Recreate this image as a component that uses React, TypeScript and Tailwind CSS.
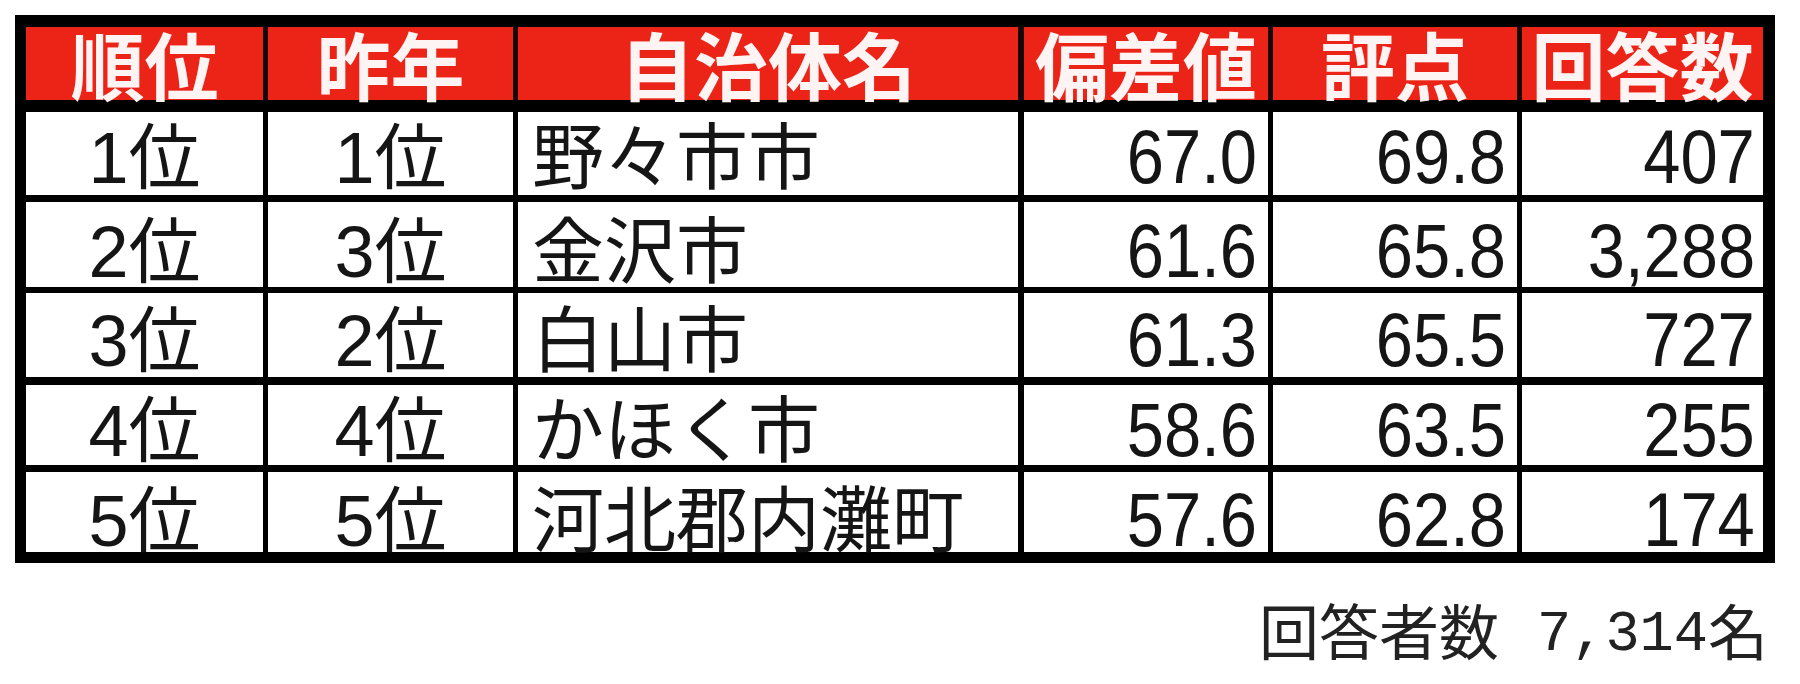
import React from "react";

type Row = {
  rank: string;
  prev: string;
  name: string;
  dev: string;
  score: string;
  count: string;
  rowCls: string;
  pb: string;
};

const rows: Row[] = [
  { rank: "1位", prev: "1位", name: "野々市市", dev: "67.0", score: "69.8", count: "407", rowCls: "h-[95px] border-t-[12px]", pb: "pb-[12px]" },
  { rank: "2位", prev: "3位", name: "金沢市", dev: "61.6", score: "65.8", count: "3,288", rowCls: "h-[92px] border-t-[7px]", pb: "pb-[10px]" },
  { rank: "3位", prev: "2位", name: "白山市", dev: "61.3", score: "65.5", count: "727", rowCls: "h-[90px] border-t-[6px]", pb: "pb-[11px]" },
  { rank: "4位", prev: "4位", name: "かほく市", dev: "58.6", score: "63.5", count: "255", rowCls: "h-[88px] border-t-[8px]", pb: "pb-[9px]" },
  { rank: "5位", prev: "5位", name: "河北郡内灘町", dev: "57.6", score: "62.8", count: "174", rowCls: "h-[87px] border-t-[7px]", pb: "pb-[6px]" },
];

const font = "font-['Liberation_Sans','Noto_Sans_CJK_JP',sans-serif]";

function Num({ v }: { v: string }) {
  return (
    <span className="inline-block text-[76px] leading-[0.7] scale-x-[0.88] origin-right whitespace-nowrap">
      {v}
    </span>
  );
}

export default function App() {
  return (
    <div className={`w-[1800px] h-[684px] bg-white pt-[15px] pl-[15px] ${font}`}>
      <div className="w-[1760px] border-black border-t-[12px] border-l-[11px] border-r-[12px] border-b-[11px] bg-white">
        {/* header */}
        <div className="flex h-[73px] bg-[#ec2418] text-[#fff4f4] font-bold text-[74px] leading-[0.7]">
          <div className="w-[237px] flex items-end justify-center pb-[4px]">順位</div>
          <div className="w-[250px] border-l-[5px] border-[#1a0505] flex items-end justify-center pb-[4px]">昨年</div>
          <div className="w-[505px] border-l-[5px] border-[#1a0505] flex items-end justify-center pb-[4px]">自治体名</div>
          <div className="w-[250px] border-l-[6px] border-[#1a0505] flex items-end justify-center pb-[4px]">偏差値</div>
          <div className="w-[249px] border-l-[5px] border-[#1a0505] flex items-end justify-center pb-[4px]">評点</div>
          <div className="w-[246px] border-l-[5px] border-[#1a0505] flex items-end justify-center pb-[4px]">回答数</div>
        </div>
        {rows.map((r) => (
          <div key={r.rank} className={`flex border-black ${r.rowCls} text-[#151515] text-[72px] leading-[0.7]`}>
            <div className={`w-[237px] flex items-end justify-center ${r.pb}`}>
              <span className="whitespace-nowrap">{r.rank}</span>
            </div>
            <div className={`w-[250px] border-l-[5px] border-black flex items-end justify-center ${r.pb}`}>
              <span className="whitespace-nowrap">{r.prev}</span>
            </div>
            <div className={`w-[505px] border-l-[5px] border-black flex items-end justify-start pl-[14px] ${r.pb}`}>
              <span className="whitespace-nowrap">{r.name}</span>
            </div>
            <div className={`w-[250px] border-l-[6px] border-black flex items-end justify-end pr-[11px] ${r.pb}`}>
              <Num v={r.dev} />
            </div>
            <div className={`w-[249px] border-l-[5px] border-black flex items-end justify-end pr-[11px] ${r.pb}`}>
              <Num v={r.score} />
            </div>
            <div className={`w-[246px] border-l-[5px] border-black flex items-end justify-end pr-[8px] ${r.pb}`}>
              <Num v={r.count} />
            </div>
          </div>
        ))}
      </div>
      {/* footer */}
      <div className="w-[1753px] flex justify-end items-end mt-[51px] text-[#222] leading-[0.7]">
        <span className="text-[60px] whitespace-nowrap">回答者数</span>
        <span className="ml-[38px] text-[57px] font-['Liberation_Mono',monospace] whitespace-nowrap">7,314</span>
        <span className="text-[60px] whitespace-nowrap">名</span>
      </div>
    </div>
  );
}
